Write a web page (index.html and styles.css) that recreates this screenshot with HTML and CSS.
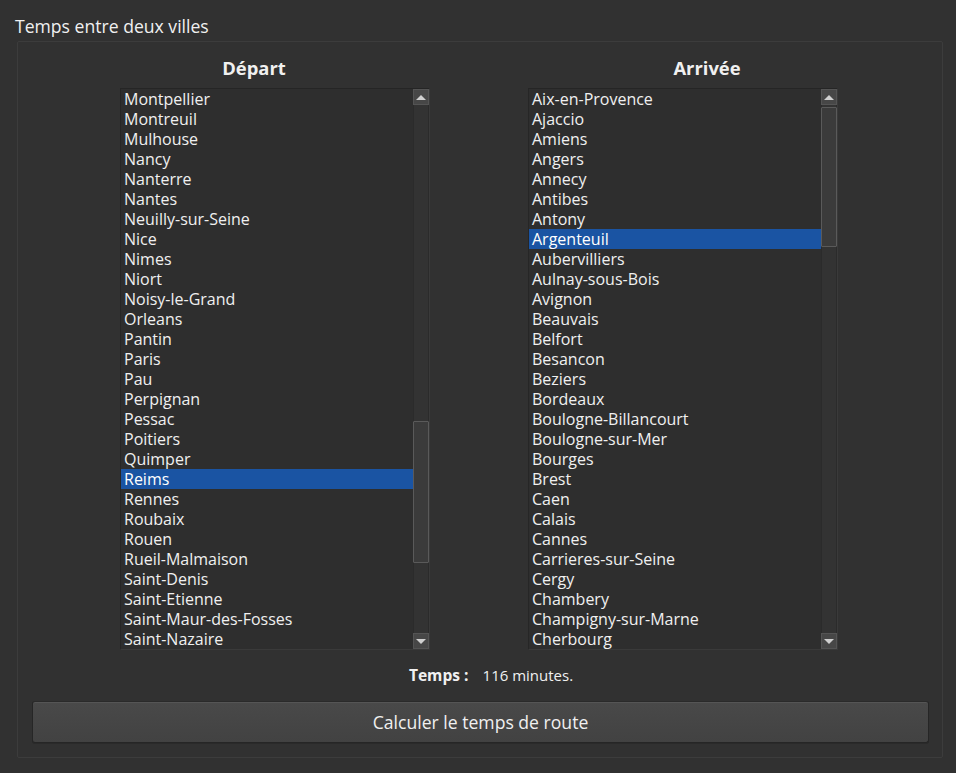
FILE: index.html
```html
<!DOCTYPE html>
<html lang="fr">
<head>
<meta charset="utf-8">
<title>Temps entre deux villes</title>
<link rel="stylesheet" href="styles.css">
</head>
<body>
<div class="window">
  <div class="group-title">Temps entre deux villes</div>
  <div class="group">
    <div class="columns">
      <div class="col col-left">
        <div class="col-head">Départ</div>
        <div class="listbox">
          <ul class="items">
            <li>Montpellier</li><li>Montreuil</li><li>Mulhouse</li><li>Nancy</li><li>Nanterre</li><li>Nantes</li><li>Neuilly-sur-Seine</li><li>Nice</li><li>Nimes</li><li>Niort</li><li>Noisy-le-Grand</li><li>Orleans</li><li>Pantin</li><li>Paris</li><li>Pau</li><li>Perpignan</li><li>Pessac</li><li>Poitiers</li><li>Quimper</li><li class="sel">Reims</li><li>Rennes</li><li>Roubaix</li><li>Rouen</li><li>Rueil-Malmaison</li><li>Saint-Denis</li><li>Saint-Etienne</li><li>Saint-Maur-des-Fosses</li><li>Saint-Nazaire</li>
          </ul>
          <div class="sbar">
            <div class="sbtn up"><span class="tri-up"></span></div>
            <div class="track"><div class="thumb" style="margin-top:316px;height:142px"></div></div>
            <div class="sbtn down"><span class="tri-down"></span></div>
          </div>
        </div>
      </div>
      <div class="col col-right">
        <div class="col-head">Arrivée</div>
        <div class="listbox">
          <ul class="items">
            <li>Aix-en-Provence</li><li>Ajaccio</li><li>Amiens</li><li>Angers</li><li>Annecy</li><li>Antibes</li><li>Antony</li><li class="sel">Argenteuil</li><li>Aubervilliers</li><li>Aulnay-sous-Bois</li><li>Avignon</li><li>Beauvais</li><li>Belfort</li><li>Besancon</li><li>Beziers</li><li>Bordeaux</li><li>Boulogne-Billancourt</li><li>Boulogne-sur-Mer</li><li>Bourges</li><li>Brest</li><li>Caen</li><li>Calais</li><li>Cannes</li><li>Carrieres-sur-Seine</li><li>Cergy</li><li>Chambery</li><li>Champigny-sur-Marne</li><li>Cherbourg</li>
          </ul>
          <div class="sbar">
            <div class="sbtn up"><span class="tri-up"></span></div>
            <div class="track"><div class="thumb" style="margin-top:2px;height:140px"></div></div>
            <div class="sbtn down"><span class="tri-down"></span></div>
          </div>
        </div>
      </div>
    </div>
    <div class="result"><span class="result-label">Temps :</span><span class="result-value">116 minutes.</span></div>
    <button class="calc">Calculer le temps de route</button>
  </div>
</div>
</body>
</html>
```
FILE: styles.css
```css
html, body {
  margin: 0;
  padding: 0;
  background: #313131;
  height: 100%;
}
body {
  font-family: "Open Sans", "Noto Sans", sans-serif;
  color: #f0f0f0;
}
.window {
  width: 956px;
  height: 773px;
  box-sizing: border-box;
  padding-top: 14px;
}
.group-title {
  font-size: 17.6px;
  line-height: 24px;
  padding-left: 15px;
  height: 27px;
}
.group {
  margin-left: 17px;
  width: 926px;
  height: 717px;
  box-sizing: border-box;
  border: 1px solid #3c3c3c;
  border-radius: 2px;
  padding-top: 13px;
}
.columns {
  display: flex;
}
.col {
  display: flex;
  flex-direction: column;
  width: 444px;
}
.col-left { margin-left: 14px; }
.col-right { margin-left: 9px; }
.col-head {
  text-align: center;
  font-weight: bold;
  font-size: 18.4px;
  line-height: 26px;
  height: 33px;
}
.col-left .listbox { margin-left: 88px; }
.col-right .listbox { margin-left: 43px; }
.listbox {
  width: 310px;
  height: 562px;
  box-sizing: border-box;
  display: flex;
  background: #2e2e2e;
  border-top: 1px solid #252525;
  border-left: 1px solid #262626;
  border-right: 1px solid #3a3a3a;
  border-bottom: 1px solid #3a3a3a;
}
.items {
  list-style: none;
  margin: 0;
  padding: 0;
  flex: 1;
  overflow: hidden;
}
.items li {
  height: 20px;
  line-height: 20px;
  font-size: 16px;
  padding-left: 3px;
  white-space: nowrap;
}
.items li.sel {
  background: #1a54a3;
  color: #ffffff;
}
.sbar {
  width: 16px;
  display: flex;
  flex-direction: column;
  background: #333333;
}
.sbtn {
  height: 16px;
  box-sizing: border-box;
  background: #474747;
  border: 1px solid #545454;
  display: flex;
  align-items: center;
  justify-content: center;
}
.tri-up {
  width: 0; height: 0;
  border-left: 5px solid transparent;
  border-right: 5px solid transparent;
  border-bottom: 5px solid #d0d0d0;
}
.tri-down {
  width: 0; height: 0;
  border-left: 5px solid transparent;
  border-right: 5px solid transparent;
  border-top: 5px solid #d0d0d0;
}
.track {
  flex: 1;
  background: #333333;
  border-left: 1px solid #2b2b2b;
  border-right: 1px solid #2b2b2b;
}
.thumb {
  box-sizing: border-box;
  background: #3b3b3b;
  border: 1px solid #5a5a5a;
  border-radius: 1px;
  margin-left: -1px;
  margin-right: -1px;
}
.result {
  display: flex;
  justify-content: center;
  align-items: center;
  height: 24px;
  margin-top: 13px;
  font-size: 15px;
  padding-left: 22px;
}
.result-label {
  font-weight: bold;
  font-size: 15.6px;
  margin-right: 14px;
}
.calc {
  display: block;
  margin: 14px 0 0 14px;
  width: 897px;
  height: 42px;
  font-family: "Open Sans", "Noto Sans", sans-serif;
  font-size: 17.6px;
  color: #f0f0f0;
  background: linear-gradient(#494949, #424242);
  border: 1px solid #262626;
  border-top-color: #2a2a2a;
  border-radius: 3px;
  box-shadow: inset 0 1px 0 #555555, 0 1px 0 #2a2a2a;
  padding: 0;
}
```
